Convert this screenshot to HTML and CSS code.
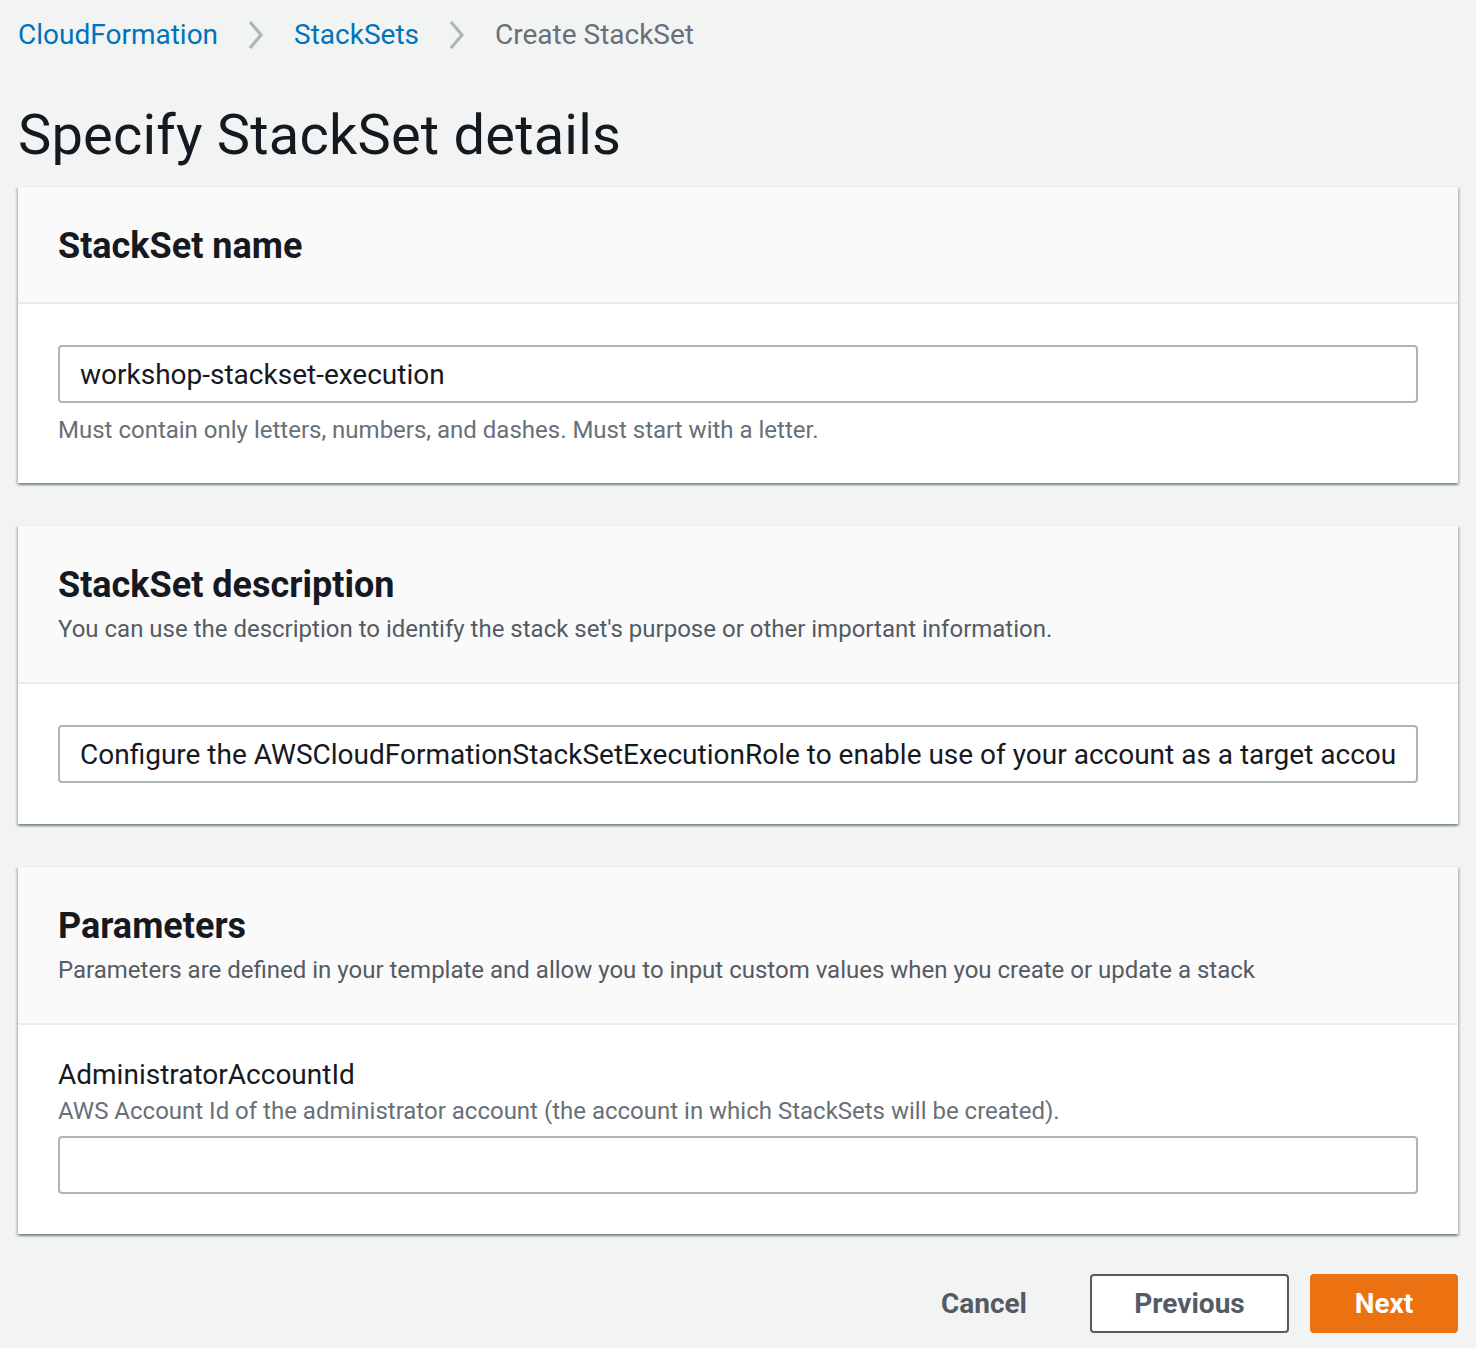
FILE: index.html
```html
<!DOCTYPE html>
<html>
<head>
<meta charset="utf-8">
<link rel="stylesheet" href="styles.css">
</head>
<body>
<div class="page">
  <nav class="breadcrumbs">
    <a class="crumb link" href="#">CloudFormation</a>
    <svg class="chev" width="20" height="30" viewBox="0 0 20 30"><path d="M4 2 L15 15 L4 28" fill="none" stroke="#aab7b8" stroke-width="3.2"/></svg>
    <a class="crumb link" href="#">StackSets</a>
    <svg class="chev" width="20" height="30" viewBox="0 0 20 30"><path d="M4 2 L15 15 L4 28" fill="none" stroke="#aab7b8" stroke-width="3.2"/></svg>
    <span class="crumb current">Create StackSet</span>
  </nav>

  <h1 class="page-title">Specify StackSet details</h1>

  <section class="card">
    <header class="card-header">
      <h2 class="card-title">StackSet name</h2>
    </header>
    <div class="card-body">
      <input class="text-input" type="text" value="workshop-stackset-execution">
      <div class="hint">Must contain only letters, numbers, and dashes. Must start with a letter.</div>
    </div>
  </section>

  <section class="card">
    <header class="card-header">
      <h2 class="card-title">StackSet description</h2>
      <div class="card-desc">You can use the description to identify the stack set's purpose or other important information.</div>
    </header>
    <div class="card-body">
      <input class="text-input" type="text" value="Configure the AWSCloudFormationStackSetExecutionRole to enable use of your account as a target account in AWS CloudFormation StackSets.">
    </div>
  </section>

  <section class="card">
    <header class="card-header">
      <h2 class="card-title">Parameters</h2>
      <div class="card-desc">Parameters are defined in your template and allow you to input custom values when you create or update a stack</div>
    </header>
    <div class="card-body body-param">
      <div class="field-label">AdministratorAccountId</div>
      <div class="field-desc">AWS Account Id of the administrator account (the account in which StackSets will be created).</div>
      <input class="text-input" type="text" value="">
    </div>
  </section>

  <div class="actions">
    <button class="btn btn-link">Cancel</button>
    <button class="btn btn-normal">Previous</button>
    <button class="btn btn-primary">Next</button>
  </div>
</div>
</body>
</html>
```

FILE: styles.css
```css
html, body {
  margin: 0;
  padding: 0;
  background: #f2f3f3;
}
body {
  font-family: Roboto, "Noto Sans", "Liberation Sans", sans-serif;
  color: #16191f;
}
.page {
  padding: 14px 18px 0 18px;
}
.breadcrumbs {
  display: flex;
  align-items: center;
  height: 42px;
  gap: 28px;
}
.crumb {
  font-size: 28px;
  line-height: 42px;
  text-decoration: none;
}
.link { color: #0073bb; }
.current { color: #687078; }
.chev { display: block; }

.page-title {
  margin: 0;
  font-size: 56px;
  font-weight: 400;
  line-height: 70px;
  padding-top: 44px;
  padding-bottom: 16px;
  color: #16191f;
  letter-spacing: 0.2px;
}

.card {
  background: #fff;
  margin-bottom: 42px;
  box-shadow: 0 2px 2px 0 rgba(0,28,36,.3), 2px 2px 2px 0 rgba(0,28,36,.15), -2px 2px 2px 0 rgba(0,28,36,.15);
  border-top: 1px solid #eaeded;
}
.card-header {
  background: #fafafa;
  border-bottom: 2px solid #eaeded;
  padding: 37px 40px 34px 40px;
}
.card-title {
  margin: 0;
  font-size: 36px;
  line-height: 44px;
  font-weight: 700;
  color: #16191f;
}
.card-desc {
  font-size: 24px;
  line-height: 44px;
  color: #545b64;
  margin-bottom: -3px;
}
.card-body {
  padding: 41px 40px 41px 40px;
}
.text-input {
  display: block;
  box-sizing: border-box;
  width: 100%;
  height: 58px;
  border: 2px solid #aab7b8;
  border-radius: 4px;
  padding: 0 20px;
  font-family: inherit;
  font-size: 28px;
  color: #16191f;
  background: #fff;
  outline: none;
}
.hint {
  font-size: 24px;
  line-height: 36px;
  margin-top: 9px;
  margin-bottom: -6px;
  color: #687078;
}
.body-param {
  padding-top: 32px;
  padding-bottom: 40px;
}
.field-label {
  font-size: 28px;
  line-height: 36px;
  color: #16191f;
}
.field-desc {
  font-size: 24px;
  line-height: 36px;
  color: #687078;
  margin-bottom: 7px;
}
.actions {
  display: flex;
  justify-content: flex-end;
  gap: 21px;
  margin-top: -2px;
}
.btn {
  box-sizing: border-box;
  height: 59px;
  border-radius: 4px;
  font-family: inherit;
  font-size: 28px;
  font-weight: 700;
  padding: 0 40px;
  border: 2px solid transparent;
  cursor: pointer;
}
.btn-link {
  background: transparent;
  color: #545b64;
}
.btn-normal {
  background: #fff;
  border-color: #545b64;
  color: #545b64;
  width: 199px;
}
.btn-primary {
  background: #ec7211;
  border-color: #ec7211;
  color: #fff;
  width: 148px;
}
```
